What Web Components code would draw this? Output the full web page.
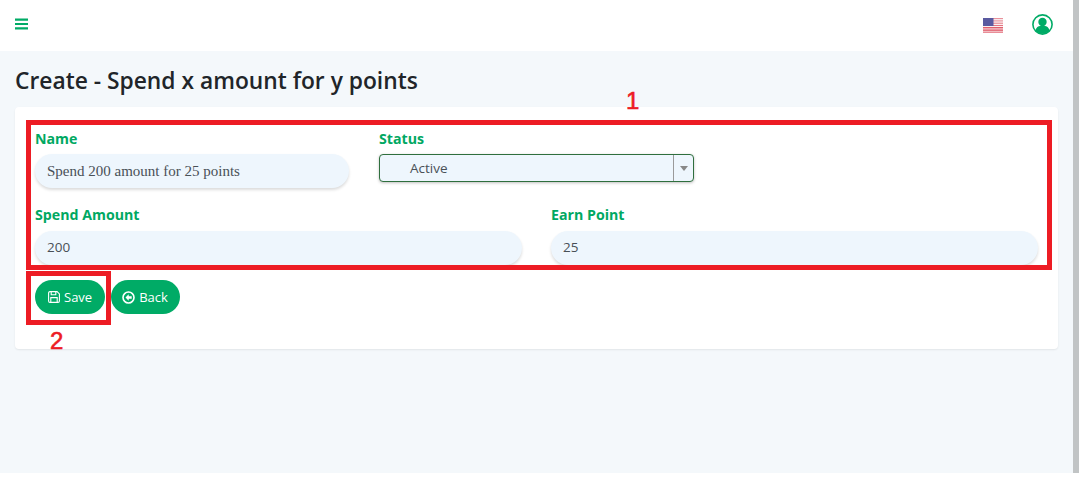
<!DOCTYPE html>
<html><head><meta charset="utf-8"><style>
html,body{margin:0;padding:0;background:#fff;overflow:hidden}
body{width:1079px;height:482px;font-family:"Open Sans","Noto Sans",sans-serif}
</style></head><body>
<app-shell>
  <top-bar slot="bar"></top-bar>
  <page-title>Create - Spend x amount for y points</page-title>
  <form-card>
    <div slot="row1">
      <form-field label="Name" value="Spend 200 amount for 25 points" serif></form-field>
      <status-select label="Status" value="Active"></status-select>
    </div>
    <div slot="row2">
      <form-field label="Spend Amount" value="200"></form-field>
      <form-field label="Earn Point" value="25"></form-field>
    </div>
    <pill-button slot="actions" icon="save">Save</pill-button>
    <pill-button slot="actions" icon="back">Back</pill-button>
  </form-card>
</app-shell>
<script>
function def(name, html){
  customElements.define(name, class extends HTMLElement{
    connectedCallback(){
      if(this.shadowRoot) return;
      const r=this.attachShadow({mode:'open'});
      r.innerHTML=typeof html==='function'?html(this):html;
    }
  });
}
def('app-shell',`<style>
:host{display:block;position:relative;width:1079px;height:482px;background:#fff;overflow:hidden}
.main{display:flex;flex-direction:column;height:473px;margin-right:6px;background:#f4f8fb}
.sb{position:absolute;right:0;top:0;width:6px;height:473px;background:#c1c4c5}
</style><div class="main"><slot name="bar"></slot><slot></slot></div><div class="sb"></div>`);
def('top-bar',`<style>
:host{display:flex;align-items:center;height:51px;background:#fff;flex:none;padding:0 27px 0 15px;box-sizing:border-box}
svg{display:block}
.sp{flex:1}
.flag{margin-right:29px;margin-top:-1px}
.u{margin-top:-3px;margin-right:-7px}
.m{margin-top:-3px}
</style>
<svg class="m" width="13" height="12" viewBox="0 0 13 12"><path d="M0 0.5h13v2.2H0zM0 4.9h13v2.2H0zM0 9.3h13v2.2H0z" fill="#00ab66"/></svg>
<div class="sp"></div>
<svg class="flag" width="20" height="15" viewBox="0 0 20 15"><rect width="20" height="15" fill="#fdfdfd"/>
<g fill="#d9384a"><rect y="0" width="20" height="1.2" opacity=".55"/><rect y="2.3" width="20" height="1.2" opacity=".55"/><rect y="4.6" width="20" height="1.2" opacity=".6"/><rect y="6.9" width="20" height="1.2" opacity=".7"/><rect y="9.2" width="20" height="1.2"/><rect y="11.5" width="20" height="1.2"/><rect y="13.6" width="20" height="1.1" opacity=".8"/></g>
<rect width="10.5" height="8" fill="#5a5aa0"/></svg>
<svg class="u" width="21" height="21" viewBox="0 0 21 21"><circle cx="10.5" cy="10.5" r="9.6" fill="#fff" stroke="#00ab66" stroke-width="1.6"/><circle cx="10.5" cy="8" r="4.2" fill="#00ab66"/><path d="M3.4 16.6c.8-3.2 3-4.6 4.6-4.6h5c1.6 0 3.8 1.4 4.6 4.6a9.4 9.4 0 0 1-14.2 0z" fill="#00ab66"/></svg>`);
def('page-title',`<style>
:host{display:block;margin:15px 0 0 15px;height:41px;color:#212529;font-size:22.8px;font-weight:600;line-height:30px}
</style><slot></slot>`);
def('form-card',`<style>
:host{display:block;position:relative;box-sizing:border-box;margin:0 0 0 15px;width:1043px;height:242px;background:#fff;border-radius:4px;box-shadow:0 1px 2px rgba(0,0,0,.08);padding:25px 19px 0 20px}
::slotted([slot=row1]){display:grid;grid-template-columns:314px 315px;column-gap:30px;height:76px}
::slotted([slot=row2]){display:grid;grid-template-columns:487px 487px;column-gap:29px;height:74px;--gap:6px;--lh:33px}
.act{display:flex;gap:6px;margin-top:-2px}
.mark{position:absolute;border:5px solid #ed1c24;box-sizing:border-box;pointer-events:none}
.num{position:absolute;color:#ed1c24;font:400 24px/24px "Liberation Sans",sans-serif;-webkit-text-stroke:.6px #ed1c24}
</style>
<slot name="row1"></slot><slot name="row2"></slot>
<div class="act"><slot name="actions"></slot></div>
<div class="mark" style="left:11px;top:13px;width:1026px;height:150px"></div>
<div class="mark" style="left:11px;top:164px;width:85px;height:54px"></div>
<span class="num" style="left:611px;top:-18px">1</span>
<span class="num" style="left:35px;top:222px">2</span>`);
def('form-field',h=>`<style>
:host{display:block}
label{display:block;color:#00a862;font-size:14.2px;font-weight:700;line-height:20px;margin-bottom:var(--gap,5px);margin-top:-3px}
.i{box-sizing:border-box;height:34px;border-radius:17px;background:#eef6fd;box-shadow:0 2px 3px rgba(0,0,0,.14);padding:0 12px;line-height:var(--lh,34px);color:#495057;
font-size:${h.hasAttribute('serif')?'15px':'13.5px'};
font-family:${h.hasAttribute('serif')?'"Liberation Serif",serif':'"Open Sans","Noto Sans",sans-serif'};white-space:nowrap;overflow:hidden}
</style><label>${h.getAttribute('label')}</label><div class="i">${h.getAttribute('value')}</div>`);
def('status-select',h=>`<style>
:host{display:block}
label{display:block;color:#00a862;font-size:14.2px;font-weight:700;line-height:20px;margin-bottom:5px;margin-top:-3px}
.s{box-sizing:border-box;display:flex;height:28px;border:1px solid #2f6f3e;border-radius:4px;background:#eef6fd;box-shadow:0 1px 3px rgba(0,0,0,.25);color:#495057;font-size:13.5px;line-height:26px}
.v{flex:1;padding-left:30px}
.a{width:19px;border-left:1px solid #9a9a9a;display:flex;align-items:center;justify-content:center}
.a i{display:block;width:0;height:0;border:4px solid transparent;border-top:5px solid #888;border-bottom:0;margin-left:1px}
</style><label>${h.getAttribute('label')}</label><div class="s"><div class="v">${h.getAttribute('value')}</div><div class="a"><i></i></div></div>`);
const icons={
save:`<svg width="12" height="12" viewBox="0 0 12 12" fill="none" stroke="#fff" stroke-width="1.1"><path d="M1.5.6h7.6l2.3 2.3v7.1a1.4 1.4 0 0 1-1.4 1.4H2A1.4 1.4 0 0 1 .6 10V2A1.4 1.4 0 0 1 2 .6z"/><path d="M3.2.8v3h4.6v-3M2.8 11v-4.4h6.4V11"/></svg>`,
back:`<svg width="13" height="13" viewBox="0 0 13 13"><circle cx="6.5" cy="6.5" r="5.5" fill="none" stroke="#fff" stroke-width="1.6"/><path d="M6.7 3.3 3.5 6.5l3.2 3.2V7.7h3V5.3h-3z" fill="#fff"/></svg>`};
def('pill-button',h=>`<style>
:host{display:inline-flex;align-items:center;gap:4px;box-sizing:border-box;height:34px;padding:0 ${h.getAttribute('icon')==='back'?'12px 0 11px':'13px'};border-radius:17px;background:#00ab66;color:#fff;font-size:13px;line-height:20px}
svg{display:block}
</style>${icons[h.getAttribute('icon')]}<slot></slot>`);
</script>
</body></html>
